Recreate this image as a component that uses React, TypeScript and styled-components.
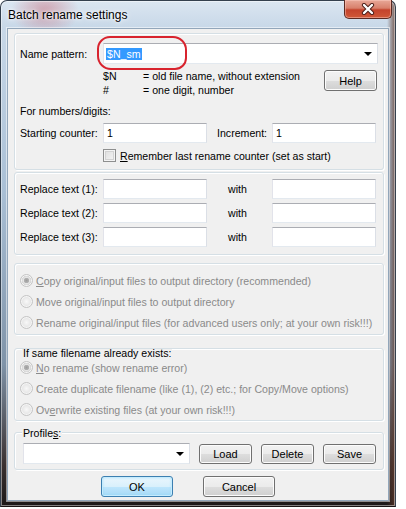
import React from 'react';
import styled, { createGlobalStyle } from 'styled-components';

const GlobalStyle = createGlobalStyle`
  html, body {
    margin: 0;
    padding: 0;
    background: #fff;
  }
  body {
    font-family: "Liberation Sans", Arial, sans-serif;
    font-size: 10.6px;
    color: #000;
  }
`;

const Window = styled.div`
  box-sizing: border-box;
  width: 396px;
  height: 507px;
  display: flex;
  flex-direction: column;
  padding: 0 6px 5px 6px;
  border: 1px solid #34404e;
  border-bottom-color: #1a1414;
  border-radius: 7px 7px 0 0;
  box-shadow: inset 0 0 0 1px rgba(255, 255, 255, 0.45);
  background:
    radial-gradient(ellipse 34px 26px at 44px 10px, rgba(200, 110, 125, 0.55), rgba(200, 110, 125, 0)),
    linear-gradient(to left, rgba(95, 55, 40, 0.75) 0, rgba(95, 55, 40, 0) 8px),
    linear-gradient(180deg, #dbe6f1 0, #c8d8e8 26px, #a9bfd5 38%, #7f93a8 72%, #3a3030 92%, #1c1818 100%);
`;

const TitleBar = styled.div`
  height: 27px;
  display: flex;
  justify-content: space-between;
  align-items: flex-start;
`;

const Title = styled.span`
  padding: 7px 0 0 1px;
  font-size: 12px;
  line-height: 14px;
  color: #000;
  text-shadow: 0 0 6px #fff, 0 0 3px #fff;
`;

const CloseButton = styled.div`
  box-sizing: border-box;
  width: 48px;
  height: 19px;
  margin: -1px -3px 0 0;
  display: flex;
  align-items: center;
  justify-content: center;
  border: 1px solid #5c2a22;
  border-top: none;
  border-radius: 0 0 5px 5px;
  background: linear-gradient(180deg, #e8a898 0%, #d8806c 45%, #c4432c 55%, #d05838 100%);
  box-shadow: inset 0 0 0 1px rgba(255, 210, 200, 0.45);
`;

const Client = styled.div`
  flex: 1;
  display: flex;
  flex-direction: column;
  padding: 4px 4px 0 6px;
  background: #f0f0f0;
  border: 1px solid #92a6ba;
  box-shadow: 0 0 0 1px rgba(255, 255, 255, 0.5);
`;

const Group = styled.div<{ $mt?: number; $pt?: number; $pb?: number }>`
  box-sizing: border-box;
  margin-top: ${p => p.$mt ?? 0}px;
  padding: ${p => p.$pt ?? 0}px 6px ${p => p.$pb ?? 0}px 5px;
  border: 1px solid #d5dfe5;
  border-radius: 3px;
  box-shadow: inset 1px 1px 0 #fff, 1px 1px 0 #fff;
  display: flex;
  flex-direction: column;
`;

// group title sitting on (or just under) the top edge of its box
const Caption = styled.div<{ $lift?: number }>`
  align-self: flex-start;
  height: 8px;
  line-height: 8px;
  margin: ${p => -(p.$lift ?? 0)}px 0 ${p => p.$lift ?? 0}px 2px;
  padding: 0 1px;
  background: #f0f0f0;
  white-space: nowrap;
`;

const Row = styled.div<{ $mt?: number }>`
  display: flex;
  align-items: center;
  margin-top: ${p => p.$mt ?? 0}px;
`;

const Label = styled.span<{ $w: number; $pl?: number }>`
  box-sizing: border-box;
  width: ${p => p.$w}px;
  padding-left: ${p => p.$pl ?? 0}px;
  flex-shrink: 0;
  white-space: nowrap;
`;

const TextLine = styled.div<{ $mt?: number }>`
  margin-top: ${p => p.$mt ?? 0}px;
  line-height: 14px;
`;

const Field = styled.div<{ $w?: number }>`
  box-sizing: border-box;
  width: ${p => (p.$w ? `${p.$w}px` : 'auto')};
  flex: ${p => (p.$w ? 'none' : '1')};
  height: 20px;
  padding: 0 3px;
  display: flex;
  align-items: center;
  background: #fff;
  border: 1px solid;
  border-color: #abadb3 #dbdfe6 #e3e9ef #e2e3ea;
`;

const Combo = styled(Field)<{ $h?: number }>`
  position: relative;
  height: ${p => p.$h ?? 20}px;
  padding: 0 5px 0 2px;
  justify-content: space-between;
`;

const Arrow = styled.span`
  width: 0;
  height: 0;
  border-left: 4px solid transparent;
  border-right: 4px solid transparent;
  border-top: 4px solid #000;
`;

const Selected = styled.span`
  background: #3399ff;
  color: #fff;
  line-height: 12px;
  padding: 0 1px;
`;

const Highlight = styled.span`
  position: absolute;
  left: -7px;
  top: -8px;
  width: 90px;
  height: 34px;
  box-sizing: border-box;
  border: 2.5px solid #d8232e;
  border-radius: 13px 14px 12px 14px;
  pointer-events: none;
`;

const LegendRow = styled.div`
  display: flex;
  justify-content: space-between;
  align-items: flex-start;
  margin-top: 5px;
`;

const Legend = styled.div`
  margin-left: 83px;
  display: grid;
  grid-template-columns: 40px auto;
  line-height: 14px;
`;

const Button = styled.div<{ $w: number; $h?: number; $mt?: number }>`
  box-sizing: border-box;
  width: ${p => p.$w}px;
  height: ${p => p.$h ?? 21}px;
  margin-top: ${p => p.$mt ?? 0}px;
  flex-shrink: 0;
  display: flex;
  align-items: center;
  justify-content: center;
  font-size: 11px;
  border: 1px solid #707070;
  border-radius: 3px;
  background: linear-gradient(180deg, #f2f2f2 0%, #ebebeb 50%, #dddddd 51%, #cfcfcf 100%);
  box-shadow: inset 0 0 0 1px #fcfcfc;
`;

const DefaultButton = styled(Button)`
  border-color: #3c7fb1;
  background: linear-gradient(180deg, #eaf6fd 0%, #d9f0fc 50%, #bee6fd 51%, #a7d9f5 100%);
  box-shadow: inset 0 0 0 1px #c6ecfd, inset 0 0 3px #7fd3fb;
`;

const CheckBox = styled.span`
  box-sizing: border-box;
  flex-shrink: 0;
  width: 13px;
  height: 13px;
  margin-right: 4px;
  border: 1px solid #8e8f8f;
  background: linear-gradient(135deg, #dcdcdc 0%, #f6f6f6 100%);
  box-shadow: inset 0 0 0 1px #f4f4f4, inset 0 0 0 2px #d2d2d2;
`;

const RadioRow = styled.div<{ $disabled?: boolean }>`
  height: 21px;
  display: flex;
  align-items: center;
  gap: 3px;
  color: ${p => (p.$disabled ? '#8a8a8a' : '#000')};
  white-space: nowrap;
`;

const Radio = styled.span<{ $checked?: boolean }>`
  box-sizing: border-box;
  flex-shrink: 0;
  width: 13px;
  height: 13px;
  border-radius: 50%;
  border: 1px solid #c4c4c4;
  background: ${p =>
    p.$checked
      ? 'radial-gradient(circle, #9c9c9c 0, #b4b4b4 2.5px, #e6e6e6 3px, #d6d6d6 4.5px, #f4f4f4 5px)'
      : 'radial-gradient(circle, #f8f8f8 0, #e8e8e8 4px, #f4f4f4 5px)'};
`;

const Footer = styled.div`
  display: flex;
  gap: 30px;
  margin: 6px 0 0 87px;
`;

const Mn = styled.u`
  text-decoration-thickness: 1px;
  text-underline-offset: 1px;
`;

const BoxRow = styled(Row)`
  margin-left: 83px;
`;

function CloseGlyph() {
  return (
    <svg width="14" height="12" viewBox="0 0 14 12">
      <path d="M3 2 L11 10 M11 2 L3 10" stroke="#4a1c16" strokeWidth="4.2" strokeLinecap="round" />
      <path d="M3 2 L11 10 M11 2 L3 10" stroke="#fff" strokeWidth="2.4" strokeLinecap="round" />
    </svg>
  );
}

const replaceRows = ['Replace text (1):', 'Replace text (2):', 'Replace text (3):'];

export default function App() {
  return (
    <>
      <GlobalStyle />
      <Window>
        <TitleBar>
          <Title>Batch rename settings</Title>
          <CloseButton>
            <CloseGlyph />
          </CloseButton>
        </TitleBar>
        <Client>
          <Group $pt={9} $pb={7}>
            <Row>
              <Label $w={83}>Name pattern:</Label>
              <Combo $h={21} style={{ marginRight: -1 }}>
                <Selected>$N_sm</Selected>
                <Arrow />
                <Highlight />
              </Combo>
            </Row>
            <LegendRow>
              <Legend>
                <span>$N</span>
                <span>= old file name, without extension</span>
                <span>#</span>
                <span>= one digit, number</span>
              </Legend>
              <Button $w={53} $mt={1}>Help</Button>
            </LegendRow>
            <TextLine $mt={7}>For numbers/digits:</TextLine>
            <Row $mt={5}>
              <Label $w={83}>Starting counter:</Label>
              <Field $w={104}>1</Field>
              <Label $w={65} $pl={10}>Increment:</Label>
              <Field $w={104}>1</Field>
            </Row>
            <BoxRow $mt={6}>
              <CheckBox />
              <span>
                <Mn>R</Mn>emember last rename counter (set as start)
              </span>
            </BoxRow>
          </Group>

          <Group $mt={2} $pt={6} $pb={7}>
            {replaceRows.map((label, i) => (
              <Row key={label} $mt={i ? 4 : 0}>
                <Label $w={83}>{label}</Label>
                <Field $w={104} />
                <Label $w={65} $pl={21}>with</Label>
                <Field $w={104} />
              </Row>
            ))}
          </Group>

          <Group $mt={8} $pt={6} $pb={1}>
            <RadioRow $disabled>
              <Radio $checked />
              <span>
                <Mn>C</Mn>opy original/input files to output directory (recommended)
              </span>
            </RadioRow>
            <RadioRow $disabled>
              <Radio />
              <span>Move original/input files to output directory</span>
            </RadioRow>
            <RadioRow $disabled>
              <Radio />
              <span>Rename original/input files (for advanced users only; at your own risk!!!)</span>
            </RadioRow>
          </Group>

          <Group $mt={13}>
            <Caption>If same filename already exists:</Caption>
            <RadioRow $disabled>
              <Radio $checked />
              <span>
                <Mn>N</Mn>o rename (show rename error)
              </span>
            </RadioRow>
            <RadioRow $disabled>
              <Radio />
              <span>Create duplicate filename (like (1), (2) etc.; for Copy/Move options)</span>
            </RadioRow>
            <RadioRow $disabled>
              <Radio />
              <span>
                Ov<Mn>e</Mn>rwrite existing files (at your own risk!!!)
              </span>
            </RadioRow>
          </Group>

          <Group $mt={11} $pb={5}>
            <Caption $lift={4}>
              Profile<Mn>s</Mn>:
            </Caption>
            <Row $mt={2} style={{ gap: 9 }}>
              <Combo $w={167} $h={21} style={{ marginLeft: 3 }}>
                <span />
                <Arrow />
              </Combo>
              <Button $w={53} $h={20}>Load</Button>
              <Button $w={53} $h={20}>Delete</Button>
              <Button $w={53} $h={20}>Save</Button>
            </Row>
          </Group>

          <Footer>
            <DefaultButton $w={72} $h={21}>OK</DefaultButton>
            <Button $w={72} $h={21}>Cancel</Button>
          </Footer>
        </Client>
      </Window>
    </>
  );
}
